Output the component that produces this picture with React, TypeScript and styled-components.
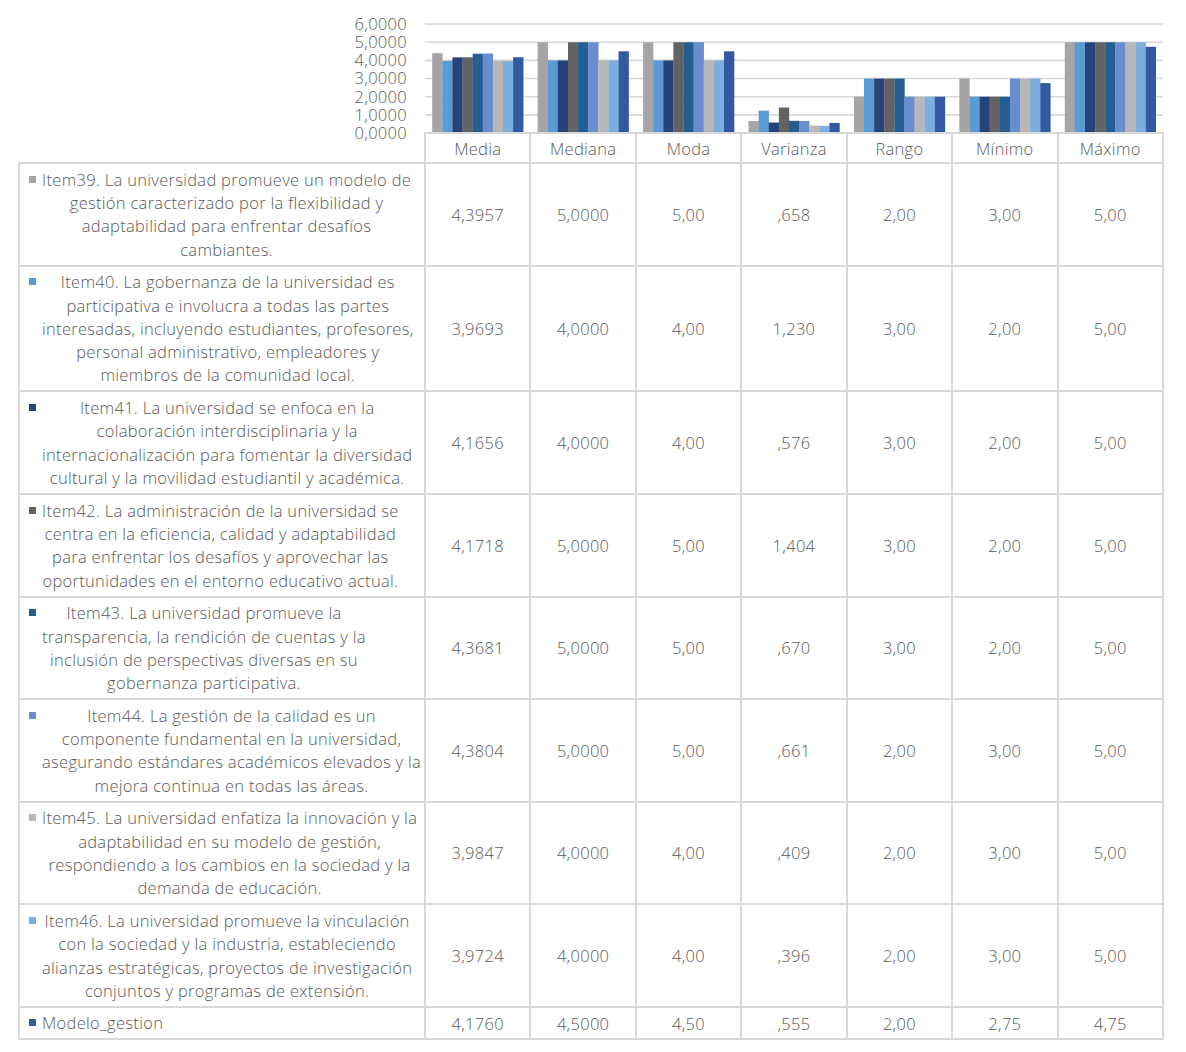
import React from 'react';
import styled, { createGlobalStyle } from 'styled-components';

const GlobalStyle = createGlobalStyle`
  html, body { margin: 0; padding: 0; background: #ffffff; }
  body {
    font-family: 'Open Sans', 'Liberation Sans', sans-serif;
    font-weight: 300;
    color: #595959;
  }
`;

const BORDER = '#d9d9d9';
const CELL_W = 103.43;
const STEP = CELL_W + 2;
const UNIT = 18.15;
const BASE = 133;

const COLORS = ['#A5A5A5', '#5B9BD5', '#264478', '#636363', '#255E91', '#698ED0', '#B7B7B7', '#7CAFDD', '#335AA1'];
const CATEGORIES = ['Media', 'Mediana', 'Moda', 'Varianza', 'Rango', 'Mínimo', 'Máximo'];
const TICKS = ['6,0000', '5,0000', '4,0000', '3,0000', '2,0000', '1,0000', '0,0000'];

type Series = { lines: string[]; left?: boolean; values: number[]; labels: string[] };

const SERIES: Series[] = [
  {
    lines: ['Item39. La universidad promueve un modelo de', 'gestión caracterizado por la flexibilidad y', 'adaptabilidad para enfrentar desafíos', 'cambiantes.'],
    values: [4.3957, 5, 5, 0.658, 2, 3, 5],
    labels: ['4,3957', '5,0000', '5,00', ',658', '2,00', '3,00', '5,00'],
  },
  {
    lines: ['Item40. La gobernanza de la universidad es', 'participativa e involucra a todas las partes', 'interesadas, incluyendo estudiantes, profesores,', 'personal administrativo, empleadores y', 'miembros de la comunidad local.'],
    values: [3.9693, 4, 4, 1.23, 3, 2, 5],
    labels: ['3,9693', '4,0000', '4,00', '1,230', '3,00', '2,00', '5,00'],
  },
  {
    lines: ['Item41. La universidad se enfoca en la', 'colaboración interdisciplinaria y la', 'internacionalización para fomentar la diversidad', 'cultural y la movilidad estudiantil y académica.'],
    values: [4.1656, 4, 4, 0.576, 3, 2, 5],
    labels: ['4,1656', '4,0000', '4,00', ',576', '3,00', '2,00', '5,00'],
  },
  {
    lines: ['Item42. La administración de la universidad se', 'centra en la eficiencia, calidad y adaptabilidad', 'para enfrentar los desafíos y aprovechar las', 'oportunidades en el entorno educativo actual.'],
    values: [4.1718, 5, 5, 1.404, 3, 2, 5],
    labels: ['4,1718', '5,0000', '5,00', '1,404', '3,00', '2,00', '5,00'],
  },
  {
    lines: ['Item43. La universidad promueve la', 'transparencia, la rendición de cuentas y la', 'inclusión de perspectivas diversas en su', 'gobernanza participativa.'],
    values: [4.3681, 5, 5, 0.67, 3, 2, 5],
    labels: ['4,3681', '5,0000', '5,00', ',670', '3,00', '2,00', '5,00'],
  },
  {
    lines: ['Item44. La gestión de la calidad es un', 'componente fundamental en la universidad,', 'asegurando estándares académicos elevados y la', 'mejora continua en todas las áreas.'],
    values: [4.3804, 5, 5, 0.661, 2, 3, 5],
    labels: ['4,3804', '5,0000', '5,00', ',661', '2,00', '3,00', '5,00'],
  },
  {
    lines: ['Item45. La universidad enfatiza la innovación y la', 'adaptabilidad en su modelo de gestión,', 'respondiendo a los cambios en la sociedad y la', 'demanda de educación.'],
    values: [3.9847, 4, 4, 0.409, 2, 3, 5],
    labels: ['3,9847', '4,0000', '4,00', ',409', '2,00', '3,00', '5,00'],
  },
  {
    lines: ['Item46. La universidad promueve la vinculación', 'con la sociedad y la industria, estableciendo', 'alianzas estratégicas, proyectos de investigación', 'conjuntos y programas de extensión.'],
    values: [3.9724, 4, 4, 0.396, 2, 3, 5],
    labels: ['3,9724', '4,0000', '4,00', ',396', '2,00', '3,00', '5,00'],
  },
  {
    lines: ['Modelo_gestion'],
    left: true,
    values: [4.176, 4.5, 4.5, 0.555, 2, 2.75, 4.75],
    labels: ['4,1760', '4,5000', '4,50', ',555', '2,00', '2,75', '4,75'],
  },
];

const Page = styled.div`
  width: 1186px;
  box-sizing: border-box;
  padding-left: 18px;
  font-size: 16.5px;
  letter-spacing: 0.3px;
`;

const ChartRow = styled.div`
  display: grid;
  grid-template-columns: 406px 740px;
  height: 132px;
`;

const YAxis = styled.div`
  align-self: start;
  display: flex;
  flex-direction: column;
  align-items: flex-end;
  padding-top: 15px;
  padding-right: 17px;
  position: relative;
  z-index: 1;
`;

const Tick = styled.span`
  display: block;
  height: ${UNIT}px;
  line-height: ${UNIT}px;
`;

const Plot = styled.svg`
  display: block;
  width: 740px;
  height: 132px;
`;

const HeaderRow = styled.div`
  display: grid;
  grid-template-columns: 406px auto;
`;

const HeaderCells = styled.div`
  display: grid;
  grid-template-columns: repeat(7, ${CELL_W}px);
  gap: 2px;
  padding: 2px 2px 0 2px;
  background: ${BORDER};
  width: fit-content;
`;

const HeaderCell = styled.div`
  background: #ffffff;
  height: 28px;
  display: flex;
  align-items: center;
  justify-content: center;
`;

const Table = styled.div`
  display: grid;
  grid-template-columns: 404px repeat(7, ${CELL_W}px);
  gap: 2px;
  padding: 2px;
  background: ${BORDER};
  width: fit-content;
`;

const LegendCell = styled.div`
  background: #ffffff;
  display: flex;
  align-items: center;
  padding: 3.7px 4px 3.7px 9px;
`;

const Entry = styled.div`
  display: flex;
  align-items: flex-start;
  gap: 6px;
`;

const Key = styled.span<{ $color: string }>`
  flex: none;
  width: 7px;
  height: 7px;
  margin-top: 8px;
  background: ${(p) => p.$color};
`;

const Label = styled.div<{ $left?: boolean }>`
  line-height: 23.3px;
  text-align: ${(p) => (p.$left ? 'left' : 'center')};
  white-space: nowrap;
`;

const ValueCell = styled.div`
  background: #ffffff;
  display: flex;
  align-items: center;
  justify-content: center;
`;

function Chart() {
  const gridYs = [6, 5, 4, 3, 2, 1].map((v) => BASE - v * UNIT);
  const barW = (STEP - 14.4) / 9;
  return (
    <Plot viewBox="0 0 740 132">
      {gridYs.map((y, i) => (
        <line key={i} x1={1} x2={739} y1={y} y2={y} stroke={BORDER} strokeWidth={1.6} />
      ))}
      {CATEGORIES.map((_, c) =>
        SERIES.map((s, k) => {
          const h = s.values[c] * UNIT;
          const x = 1 + c * STEP + 7.2 + k * barW;
          return <rect key={`${c}-${k}`} x={x} y={BASE - h} width={barW + 0.2} height={h} fill={COLORS[k]} />;
        })
      )}
    </Plot>
  );
}

export default function App() {
  return (
    <>
      <GlobalStyle />
      <Page>
        <ChartRow>
          <YAxis>
            {TICKS.map((t) => (
              <Tick key={t}>{t}</Tick>
            ))}
          </YAxis>
          <Chart />
        </ChartRow>
        <HeaderRow>
          <div />
          <HeaderCells>
            {CATEGORIES.map((c) => (
              <HeaderCell key={c}>{c}</HeaderCell>
            ))}
          </HeaderCells>
        </HeaderRow>
        <Table>
          {SERIES.map((s, k) => (
            <React.Fragment key={k}>
              <LegendCell>
                <Entry>
                  <Key $color={COLORS[k]} />
                  <Label $left={s.left}>
                    {s.lines.map((l, i) => (
                      <React.Fragment key={i}>
                        {i > 0 && <br />}
                        {l}
                      </React.Fragment>
                    ))}
                  </Label>
                </Entry>
              </LegendCell>
              {s.labels.map((v, c) => (
                <ValueCell key={c}>{v}</ValueCell>
              ))}
            </React.Fragment>
          ))}
        </Table>
      </Page>
    </>
  );
}
